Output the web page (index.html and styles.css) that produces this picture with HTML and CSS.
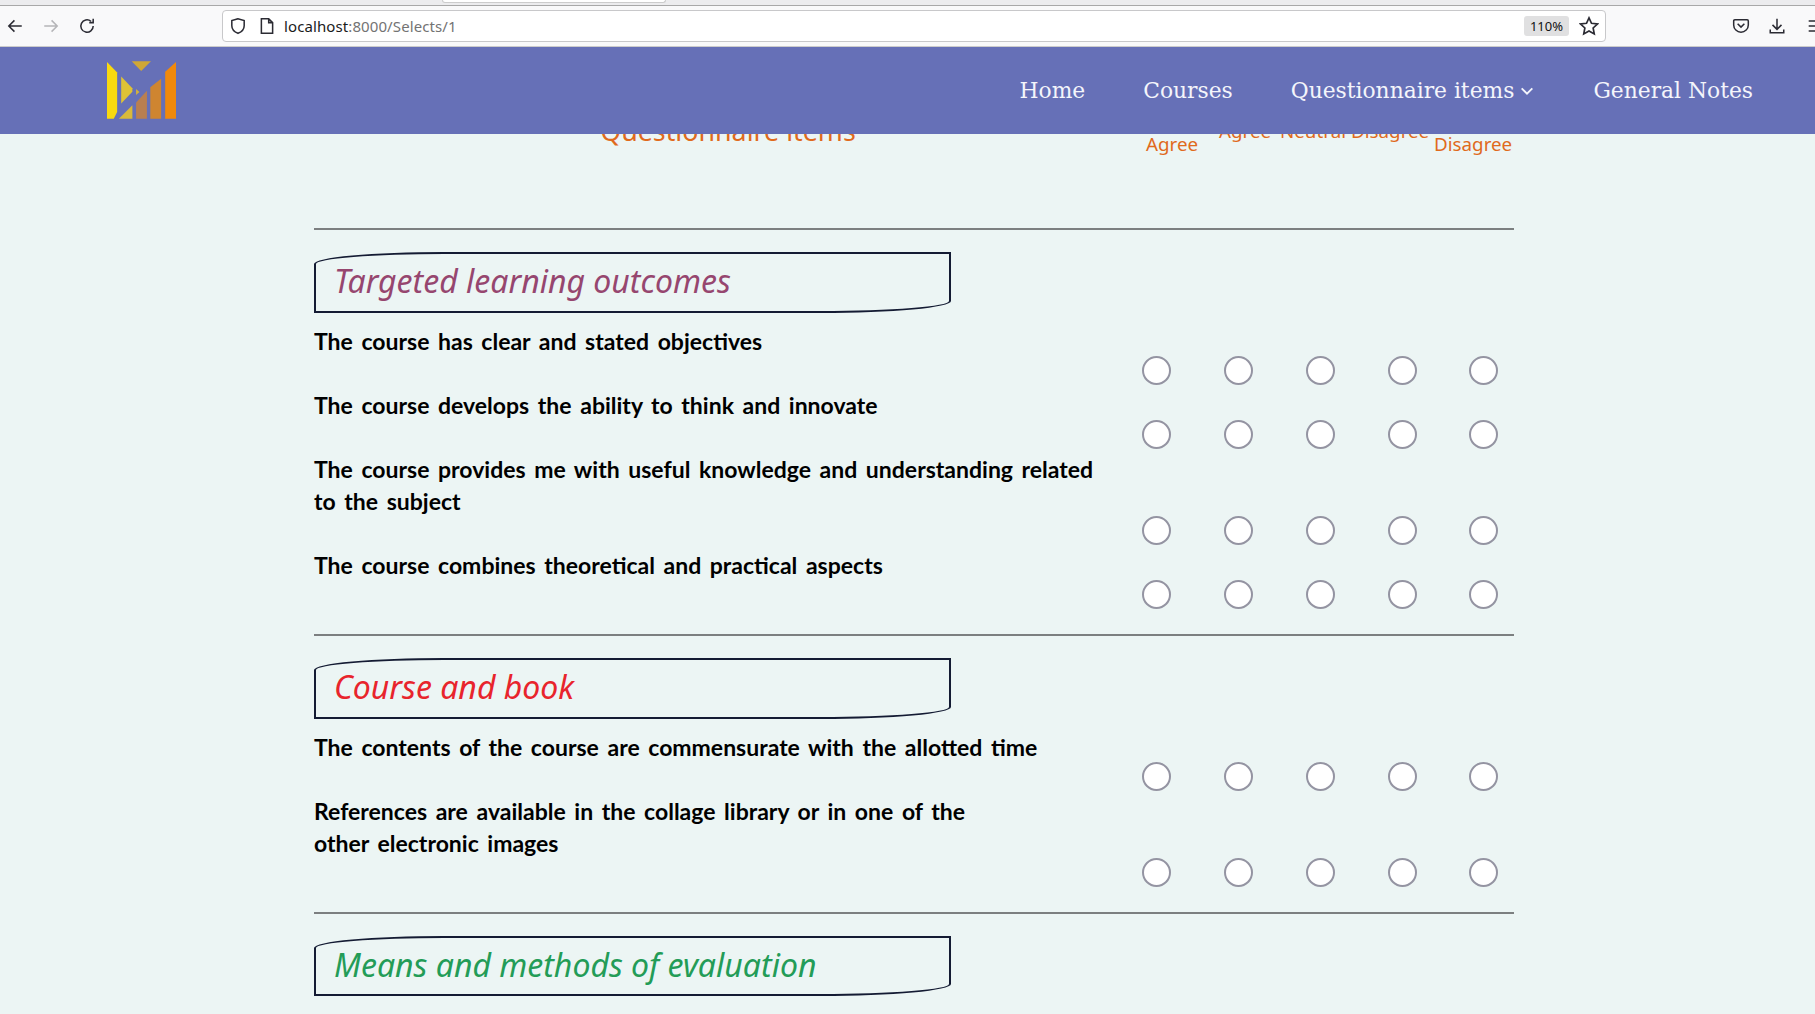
FILE: index.html
```html
<!DOCTYPE html>
<html lang="en">
<head>
<meta charset="utf-8">
<title>Selects</title>
<link rel="stylesheet" href="styles.css">
</head>
<body>
<div class="tabstrip"><div class="tab-edge"></div></div>
<div class="toolbar">
  <div class="nav-btns">
    <svg class="ico" viewBox="0 0 16 16"><path d="M14 8H2.500M7.500 3 2.500 8l5 5"/></svg>
    <svg class="ico faded" viewBox="0 0 16 16"><path d="M2 8h11.500M8.500 3l5 5-5 5"/></svg>
    <svg class="ico" viewBox="0 0 16 16"><path d="M13.500 8A5.500 5.500 0 1 1 11.500 3.800M13.500 1.500v3.500H10"/></svg>
  </div>
  <div class="urlbar">
    <svg class="ico" viewBox="0 0 16 16"><path d="M8 1.500 2.500 3.200v4.500c0 3.300 2.600 5.600 5.500 6.800 2.900-1.200 5.500-3.500 5.500-6.800V3.200z"/></svg>
    <svg class="ico page-ico" viewBox="0 0 16 16"><path d="M3 1.500h6.500L13 5v9.500H3zM9.500 1.500V5H13"/></svg>
    <div class="url"><span class="host">localhost</span>:8000/Selects/1</div>
    <div class="zoom-badge">110%</div>
    <svg class="ico star" viewBox="0 0 16 16"><path d="m8 1.500 2 4.300 4.700.6-3.400 3.200.9 4.700L8 12l-4.200 2.300.9-4.700-3.400-3.200 4.700-.6z"/></svg>
  </div>
  <div class="tools">
    <svg class="ico" viewBox="0 0 16 16"><path d="M2.500 2.500h11a1 1 0 0 1 1 1V7a6.500 6.500 0 0 1-13 0V3.500a1 1 0 0 1 1-1zM5 6l3 3 3-3"/></svg>
    <svg class="ico" viewBox="0 0 16 16"><path d="M8 1.500v9.500M4 7l4 4 4-4M2 11v3h12v-3"/></svg>
    <svg class="ico menu-ico" viewBox="0 0 16 16"><path d="M1.500 3.500h13M1.500 8h13M1.500 12.500h13"/></svg>
  </div>
</div>
<header class="site-nav">
  <svg class="logo" viewBox="80 35 204 170">
    <polygon fill="#f9d90f" points="80,37 110,68 110,185 100,205 80,205"/>
    <polygon fill="#dfc234" points="122,80 155,115 155,125 122,160"/>
    <polygon fill="#d9b93a" points="115,205 155,165 155,205"/>
    <polygon fill="#cfa736" points="153,35 210,35 181,64"/>
    <polygon fill="#d4b13c" points="166,117 176,126 166,135"/>
    <polygon fill="#b97f50" points="166,205 166,157 198,122 198,205"/>
    <polygon fill="#cf8530" points="208,205 208,112 240,87 240,205"/>
    <polygon fill="#f0890c" points="252,205 252,66 284,37 284,205"/>
  </svg>
  <nav class="links">
    <a>Home</a>
    <a>Courses</a>
    <a>Questionnaire items<svg class="chev" viewBox="0 0 12 12"><path d="M2 4l4 4 4-4"/></svg></a>
    <a>General Notes</a>
  </nav>
</header>
<main class="page">
  <div class="col-head">
    <div class="col-title">Questionnaire items</div>
    <div class="col-labels">
      <span class="lbl low lbl-sa">Agree</span>
      <span class="lbl lbl-a">Agree</span>
      <span class="lbl lbl-n">Neutral</span>
      <span class="lbl lbl-d">Disagree</span>
      <span class="lbl low lbl-sd">Disagree</span>
    </div>
  </div>
  <hr class="rule">
  <h2 class="sec plum">Targeted learning outcomes</h2>
  <div class="row"><p class="q">The course has clear and stated objectives</p><i class="r"></i><i class="r"></i><i class="r"></i><i class="r"></i><i class="r"></i></div>
  <div class="row"><p class="q">The course develops the ability to think and innovate</p><i class="r"></i><i class="r"></i><i class="r"></i><i class="r"></i><i class="r"></i></div>
  <div class="row"><p class="q">The course provides me with useful knowledge and understanding related<br>to the subject</p><i class="r"></i><i class="r"></i><i class="r"></i><i class="r"></i><i class="r"></i></div>
  <div class="row"><p class="q">The course combines theoretical and practical aspects</p><i class="r"></i><i class="r"></i><i class="r"></i><i class="r"></i><i class="r"></i></div>
  <hr class="rule">
  <h2 class="sec red">Course and book</h2>
  <div class="row"><p class="q">The contents of the course are commensurate with the allotted time</p><i class="r"></i><i class="r"></i><i class="r"></i><i class="r"></i><i class="r"></i></div>
  <div class="row"><p class="q">References are available in the collage library or in one of the<br>other electronic images</p><i class="r"></i><i class="r"></i><i class="r"></i><i class="r"></i><i class="r"></i></div>
  <hr class="rule">
  <h2 class="sec green sec-last">Means and methods of evaluation</h2>
</main>
</body>
</html>
```
FILE: styles.css
```css
* { box-sizing: border-box; }
html, body { margin: 0; height: 100%; overflow: hidden; }
body { background: #ecf5f4; font-family: "Noto Sans", sans-serif; }

.tabstrip { height: 6px; background: #ececee; border-bottom: 1px solid #a8a8a8; padding-left: 442px; }
.tab-edge { width: 224px; height: 3px; background: #fff; border: 1px solid #ccc; border-top: 0; border-radius: 0 0 3px 3px; }
.toolbar { height: 41px; background: #f9f9fa; border-bottom: 1px solid #ccc; display: flex; align-items: center; }
.ico { width: 18px; height: 18px; fill: none; stroke: #2b2b33; stroke-width: 1.35; flex: none; }
.faded { stroke: #b5b5b8; }
.nav-btns { display: flex; flex: none; gap: 18px; padding-left: 6px; width: 222px; }
.urlbar { flex: none; width: 1384px; height: 32px; background: #fff; border: 1px solid #c8c8ca; border-radius: 4px; display: flex; align-items: center; padding: 0 6px; }
.page-ico { margin-left: 11px; }
.url { flex: 1; margin-left: 8px; font: 15px "Noto Sans", sans-serif; letter-spacing: .1px; color: #737373; white-space: nowrap; }
.host { color: #1a1a1a; }
.zoom-badge { width: 45px; height: 20px; background: #e0e0e1; border-radius: 3px; font: 13px/20px "Noto Sans", sans-serif; text-align: center; color: #111; }
.star { margin-left: 10px; width: 20px; height: 20px; }
.tools { display: flex; flex: none; gap: 18px; padding-left: 126px; white-space: nowrap; }
.menu-ico { margin-left: 3px; }

.site-nav { position: relative; z-index: 2; height: 87px; background: #6670b7; display: flex; align-items: center; padding-left: 107px; }
.logo { width: 69px; height: 58px; flex: none; margin-bottom: 2px; }
.links { margin-left: auto; padding-right: 62px; display: flex; gap: 58px; font: 21.8px "DejaVu Serif", serif; color: #f4f5fb; }
.links a { display: flex; align-items: center; white-space: nowrap; }
.chev { width: 16px; height: 16px; margin-left: 5px; fill: none; stroke: #f4f5fb; stroke-width: 1.4; }

main.page { width: 1200px; margin: 0 0 0 314px; }
.col-head { display: grid; grid-template-columns: 802px 1fr; height: 109px; margin-top: -15px; }
.col-title { font-size: 26.8px; line-height: 24px; color: #e06a1c; text-align: center; width: 828px; }
.col-labels { position: relative; }
.lbl { position: absolute; top: 0; font-size: 18.8px; line-height: 24px; color: #e06a1c; }
.low { top: 13px; }
.lbl-sa { left: 30px; }
.lbl-a { left: 103px; }
.lbl-n { left: 164px; }
.lbl-d { left: 235px; }
.lbl-sd { left: 318px; }

.rule { height: 2px; margin: 0 0 22px; border: 0; background: #7c7f80; }
.sec { width: 637px; height: 61px; margin: 0 0 13px; padding-left: 18px; border: 2px solid #141b33; border-radius: 130px 0 130px 0 / 12px 0 12px 0; font-size: 32px; line-height: 54px; font-weight: 400; font-style: italic; }
.sec-last { height: 60px; }
.plum { color: #96466f; }
.red { color: #e8242c; }
.green { color: #239c57; }

.row { display: grid; grid-template-columns: 802px repeat(5, 81.75px); align-items: end; }
.q { margin: -1px 0 33px; font-family: Lato, sans-serif; font-size: 23px; word-spacing: 3px; line-height: 32px; font-weight: 700; color: #000; grid-column: 1; }
.r { justify-self: center; width: 29px; height: 29px; margin-bottom: 5px; background: #fff; border: 2px solid #9494a2; border-radius: 50%; }
.row + .rule { margin-top: 20px; }
```
